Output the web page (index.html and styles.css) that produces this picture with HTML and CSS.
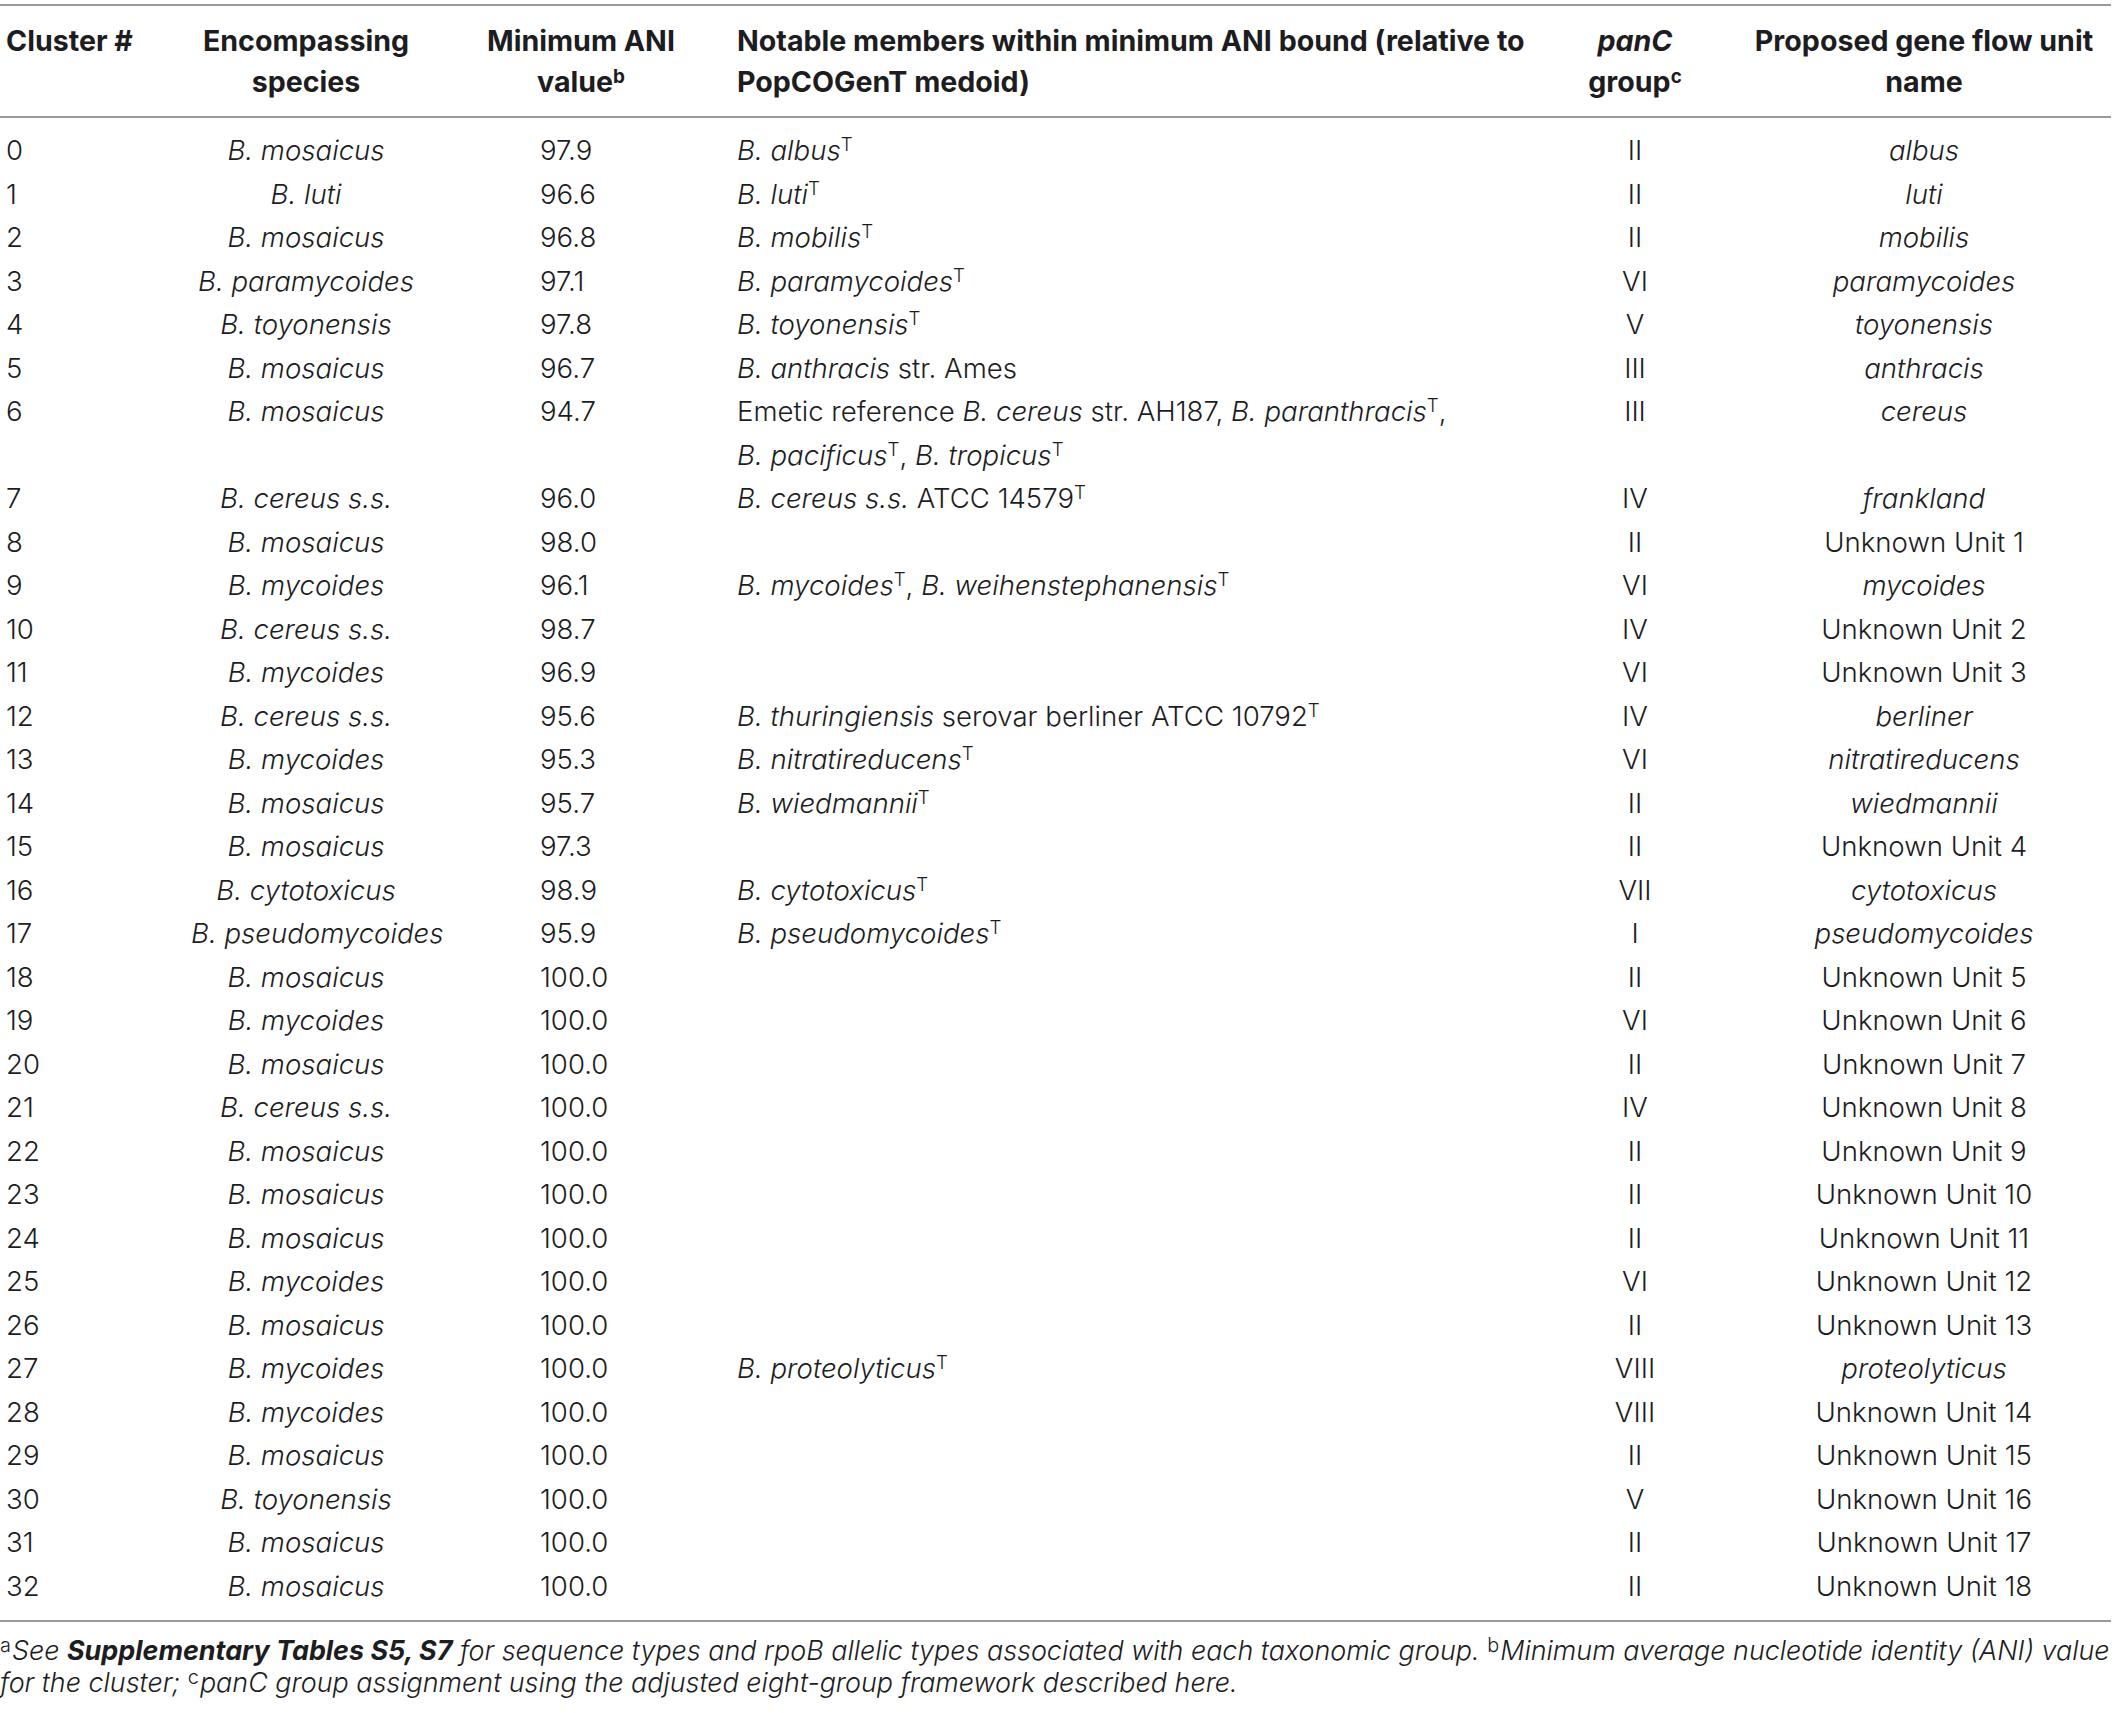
FILE: index.html
```html
<!DOCTYPE html>
<html lang="en">
<head>
<meta charset="utf-8">
<title>Table – PopCOGenT clusters</title>
<link rel="stylesheet" href="styles.css">
</head>
<body>
<table class="data">
  <colgroup>
    <col class="c-cluster">
    <col class="c-species">
    <col class="c-ani">
    <col class="c-members">
    <col class="c-panc">
    <col class="c-name">
  </colgroup>
  <thead>
    <tr>
      <th class="left">Cluster #</th>
      <th>Encompassing<br>species</th>
      <th class="ani-h">Minimum ANI<br>value<sup>b</sup></th>
      <th class="left">Notable members within minimum ANI bound (relative to<br>PopCOGenT medoid)</th>
      <th><i>panC</i><br>group<sup>c</sup></th>
      <th>Proposed gene flow unit<br>name</th>
    </tr>
  </thead>
  <tbody>
    <tr><td class="left">0</td><td><i>B. mosaicus</i></td><td class="ani">97.9</td><td class="mem"><span class="tx"><i>B. albus</i><sup>T</sup></span></td><td>II</td><td><i>albus</i></td></tr>
    <tr><td class="left">1</td><td><i>B. luti</i></td><td class="ani">96.6</td><td class="mem"><span class="tx"><i>B. luti</i><sup>T</sup></span></td><td>II</td><td><i>luti</i></td></tr>
    <tr><td class="left">2</td><td><i>B. mosaicus</i></td><td class="ani">96.8</td><td class="mem"><span class="tx"><i>B. mobilis</i><sup>T</sup></span></td><td>II</td><td><i>mobilis</i></td></tr>
    <tr><td class="left">3</td><td><i>B. paramycoides</i></td><td class="ani">97.1</td><td class="mem"><span class="tx"><i>B. paramycoides</i><sup>T</sup></span></td><td>VI</td><td><i>paramycoides</i></td></tr>
    <tr><td class="left">4</td><td><i>B. toyonensis</i></td><td class="ani">97.8</td><td class="mem"><span class="tx"><i>B. toyonensis</i><sup>T</sup></span></td><td>V</td><td><i>toyonensis</i></td></tr>
    <tr><td class="left">5</td><td><i>B. mosaicus</i></td><td class="ani">96.7</td><td class="mem"><span class="tx"><i>B. anthracis</i></span> str. Ames</td><td>III</td><td><i>anthracis</i></td></tr>
    <tr><td class="left">6</td><td><i>B. mosaicus</i></td><td class="ani">94.7</td><td class="mem">Emetic reference <span class="tx"><i>B. cereus</i></span> str. AH187, <span class="tx"><i>B. paranthracis</i><sup>T</sup>,</span> <span class="tx"><i>B. pacificus</i><sup>T</sup>,</span> <span class="tx"><i>B. tropicus</i><sup>T</sup></span></td><td>III</td><td><i>cereus</i></td></tr>
    <tr><td class="left">7</td><td><i>B. cereus s.s.</i></td><td class="ani">96.0</td><td class="mem"><span class="tx"><i>B. cereus s.s.</i></span> ATCC 14579<sup>T</sup></td><td>IV</td><td><i>frankland</i></td></tr>
    <tr><td class="left">8</td><td><i>B. mosaicus</i></td><td class="ani">98.0</td><td class="mem"></td><td>II</td><td>Unknown Unit 1</td></tr>
    <tr><td class="left">9</td><td><i>B. mycoides</i></td><td class="ani">96.1</td><td class="mem"><span class="tx"><i>B. mycoides</i><sup>T</sup>,</span> <span class="tx"><i>B. weihenstephanensis</i><sup>T</sup></span></td><td>VI</td><td><i>mycoides</i></td></tr>
    <tr><td class="left">10</td><td><i>B. cereus s.s.</i></td><td class="ani">98.7</td><td class="mem"></td><td>IV</td><td>Unknown Unit 2</td></tr>
    <tr><td class="left">11</td><td><i>B. mycoides</i></td><td class="ani">96.9</td><td class="mem"></td><td>VI</td><td>Unknown Unit 3</td></tr>
    <tr><td class="left">12</td><td><i>B. cereus s.s.</i></td><td class="ani">95.6</td><td class="mem"><span class="tx"><i>B. thuringiensis</i></span> serovar berliner ATCC 10792<sup>T</sup></td><td>IV</td><td><i>berliner</i></td></tr>
    <tr><td class="left">13</td><td><i>B. mycoides</i></td><td class="ani">95.3</td><td class="mem"><span class="tx"><i>B. nitratireducens</i><sup>T</sup></span></td><td>VI</td><td><i>nitratireducens</i></td></tr>
    <tr><td class="left">14</td><td><i>B. mosaicus</i></td><td class="ani">95.7</td><td class="mem"><span class="tx"><i>B. wiedmannii</i><sup>T</sup></span></td><td>II</td><td><i>wiedmannii</i></td></tr>
    <tr><td class="left">15</td><td><i>B. mosaicus</i></td><td class="ani">97.3</td><td class="mem"></td><td>II</td><td>Unknown Unit 4</td></tr>
    <tr><td class="left">16</td><td><i>B. cytotoxicus</i></td><td class="ani">98.9</td><td class="mem"><span class="tx"><i>B. cytotoxicus</i><sup>T</sup></span></td><td>VII</td><td><i>cytotoxicus</i></td></tr>
    <tr><td class="left">17</td><td><i>B. pseudomycoides</i></td><td class="ani">95.9</td><td class="mem"><span class="tx"><i>B. pseudomycoides</i><sup>T</sup></span></td><td>I</td><td><i>pseudomycoides</i></td></tr>
    <tr><td class="left">18</td><td><i>B. mosaicus</i></td><td class="ani">100.0</td><td class="mem"></td><td>II</td><td>Unknown Unit 5</td></tr>
    <tr><td class="left">19</td><td><i>B. mycoides</i></td><td class="ani">100.0</td><td class="mem"></td><td>VI</td><td>Unknown Unit 6</td></tr>
    <tr><td class="left">20</td><td><i>B. mosaicus</i></td><td class="ani">100.0</td><td class="mem"></td><td>II</td><td>Unknown Unit 7</td></tr>
    <tr><td class="left">21</td><td><i>B. cereus s.s.</i></td><td class="ani">100.0</td><td class="mem"></td><td>IV</td><td>Unknown Unit 8</td></tr>
    <tr><td class="left">22</td><td><i>B. mosaicus</i></td><td class="ani">100.0</td><td class="mem"></td><td>II</td><td>Unknown Unit 9</td></tr>
    <tr><td class="left">23</td><td><i>B. mosaicus</i></td><td class="ani">100.0</td><td class="mem"></td><td>II</td><td>Unknown Unit 10</td></tr>
    <tr><td class="left">24</td><td><i>B. mosaicus</i></td><td class="ani">100.0</td><td class="mem"></td><td>II</td><td>Unknown Unit 11</td></tr>
    <tr><td class="left">25</td><td><i>B. mycoides</i></td><td class="ani">100.0</td><td class="mem"></td><td>VI</td><td>Unknown Unit 12</td></tr>
    <tr><td class="left">26</td><td><i>B. mosaicus</i></td><td class="ani">100.0</td><td class="mem"></td><td>II</td><td>Unknown Unit 13</td></tr>
    <tr><td class="left">27</td><td><i>B. mycoides</i></td><td class="ani">100.0</td><td class="mem"><span class="tx"><i>B. proteolyticus</i><sup>T</sup></span></td><td>VIII</td><td><i>proteolyticus</i></td></tr>
    <tr><td class="left">28</td><td><i>B. mycoides</i></td><td class="ani">100.0</td><td class="mem"></td><td>VIII</td><td>Unknown Unit 14</td></tr>
    <tr><td class="left">29</td><td><i>B. mosaicus</i></td><td class="ani">100.0</td><td class="mem"></td><td>II</td><td>Unknown Unit 15</td></tr>
    <tr><td class="left">30</td><td><i>B. toyonensis</i></td><td class="ani">100.0</td><td class="mem"></td><td>V</td><td>Unknown Unit 16</td></tr>
    <tr><td class="left">31</td><td><i>B. mosaicus</i></td><td class="ani">100.0</td><td class="mem"></td><td>II</td><td>Unknown Unit 17</td></tr>
    <tr><td class="left">32</td><td><i>B. mosaicus</i></td><td class="ani">100.0</td><td class="mem"></td><td>II</td><td>Unknown Unit 18</td></tr>
  </tbody>
</table>
<p class="notes"><sup>a</sup><i>See <b>Supplementary Tables S5, S7</b> for sequence types and rpoB allelic types associated with each taxonomic group.</i> <sup>b</sup><i>Minimum average nucleotide identity (ANI) value for the cluster;</i> <sup>c</sup><i>panC group assignment using the adjusted eight-group framework described here.</i></p>
</body>
</html>
```

FILE: styles.css
```css
html, body {
  margin: 0;
  padding: 0;
  background: #ffffff;
}

body {
  font-family: "Inter", "Liberation Sans", sans-serif;
  font-weight: 300;
  color: #1d1d1f;
  font-size: 27.6px;
}

.data {
  width: 2111px;
  margin-top: 4px;
  border-collapse: collapse;
  table-layout: fixed;
  border-top: 2px solid #9a9a9a;
  border-bottom: 2px solid #9a9a9a;
}

.c-cluster { width: 191px; }
.c-species { width: 230px; }
.c-ani     { width: 310px; }
.c-members { width: 802px; }
.c-panc    { width: 204px; }
.c-name    { width: 374px; }

.data thead tr {
  border-bottom: 2px solid #9a9a9a;
}

.data th {
  font-size: 28.6px;
  font-weight: 700;
  line-height: 41px;
  padding: 13.5px 0 14.5px 0;
  text-align: center;
  vertical-align: top;
  white-space: nowrap;
}

.data td {
  line-height: 43.5px;
  padding: 0;
  text-align: center;
  vertical-align: top;
  white-space: nowrap;
}

.data tbody tr:first-child td { padding-top: 11px; }
.data tbody tr:last-child td { padding-bottom: 12px; }

.data .left {
  text-align: left;
  padding-left: 6px;
}

.data .ani-h {
  padding-left: 10px;
}

.data td.ani {
  text-align: left;
  padding-left: 119px;
}

.data td.mem {
  text-align: left;
  padding-left: 6px;
  white-space: normal;
}

.tx {
  white-space: nowrap;
}

.data sup {
  font-size: 0.68em;
  line-height: 0;
  vertical-align: 0.5em;
  font-style: normal;
}

.data th sup {
  font-size: 0.66em;
}

.notes {
  margin: 12px 0 0 0;
  font-size: 26.9px;
  line-height: 32px;
}

.notes sup {
  font-size: 0.74em;
  line-height: 0;
  vertical-align: 0.42em;
  margin-right: 1px;
}

.notes b {
  font-weight: 700;
}
```
